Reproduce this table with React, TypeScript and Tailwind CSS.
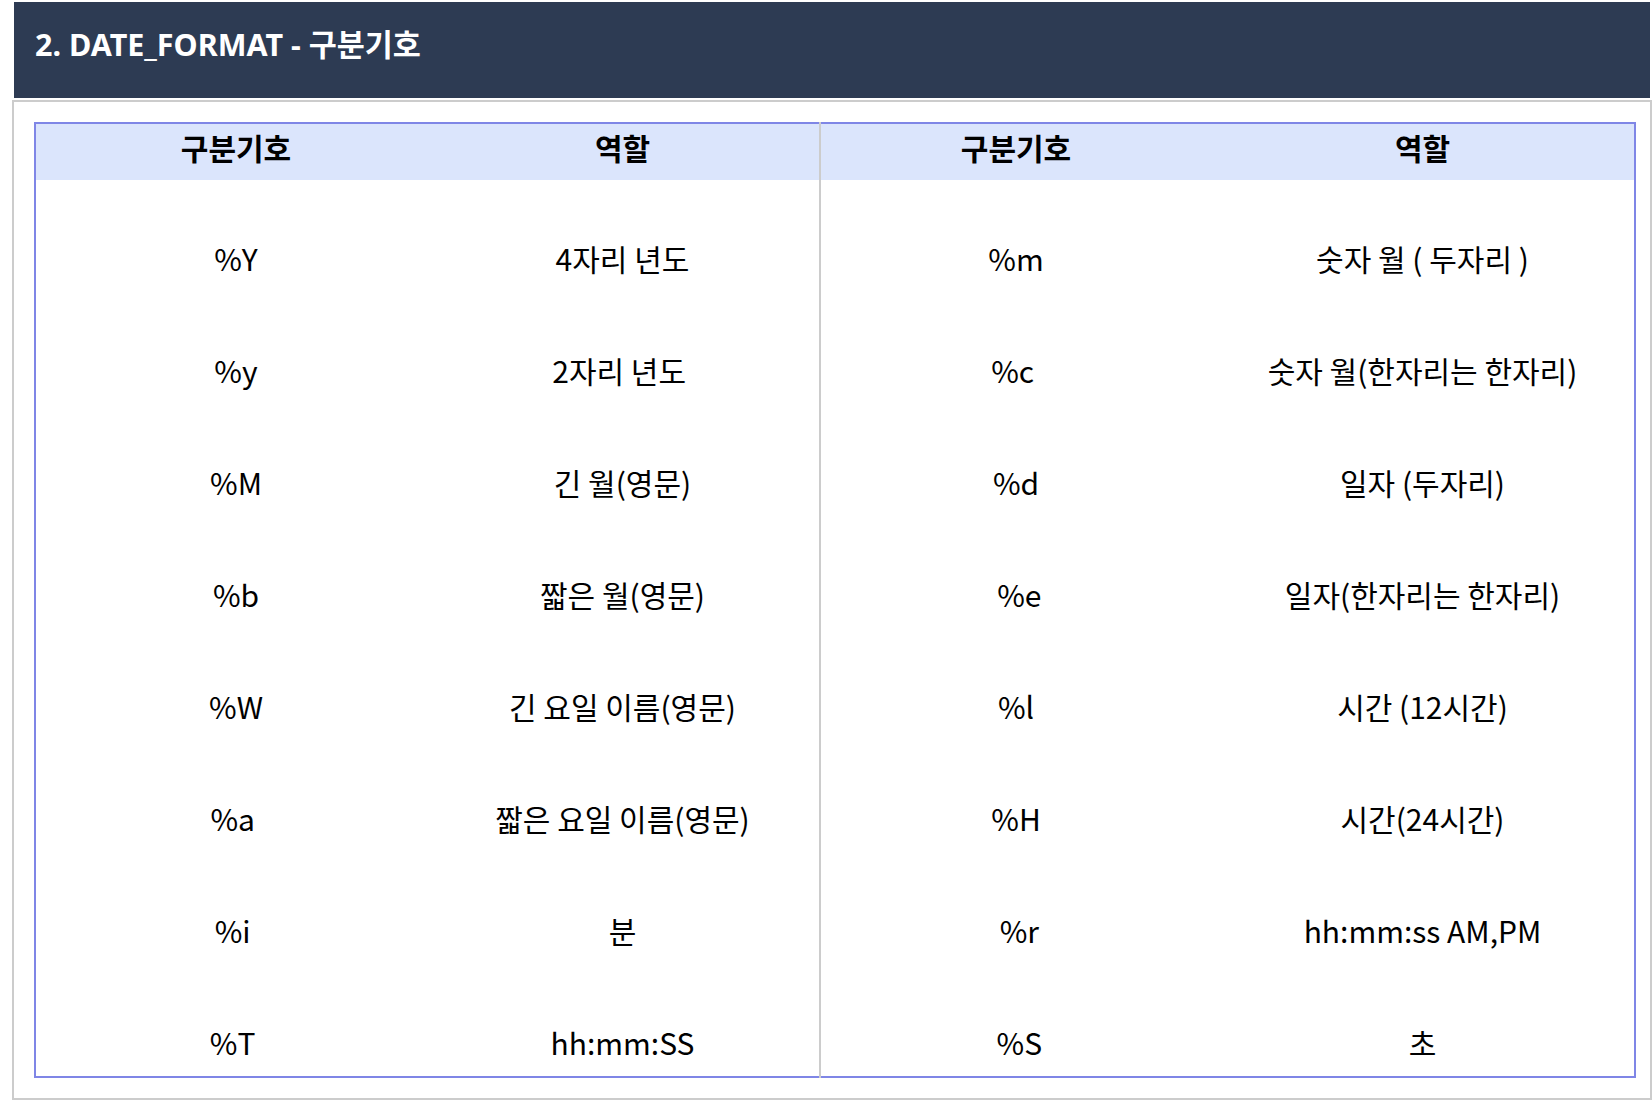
import React from 'react';

const leftRows = [
  ['%Y', '4자리 년도'],
  ['%y', '2자리 년도\u00a0'],
  ['%M', '긴 월(영문)'],
  ['%b', '짧은 월(영문)'],
  ['%W', '긴 요일 이름(영문)'],
  ['%a\u00a0', '짧은 요일 이름(영문)'],
  ['%i\u00a0', '분'],
  ['%T\u00a0', 'hh:mm:SS'],
];

const rightRows = [
  ['%m', '숫자 월 ( 두자리 )'],
  ['%c\u00a0', '숫자 월(한자리는 한자리)'],
  ['%d', '일자 (두자리)'],
  ['\u00a0%e', '일자(한자리는 한자리)'],
  ['%l', '시간 (12시간)'],
  ['%H', '시간(24시간)'],
  ['\u00a0%r', 'hh:mm:ss AM,PM'],
  ['\u00a0%S', '초'],
];

const HalfTable = ({ rows, w1, w2, side }: any) => {
  return (
    <div
      className={
        side === 'left'
          ? 'border-y-2 border-l-2 border-[#7f86e6]'
          : 'border-y-2 border-r-2 border-[#7f86e6]'
      }
    >
      <div className="flex h-[56px] bg-[#dbe5fc] font-bold">
        <div className={`${w1} flex items-center justify-center pb-[9px]`}>구분기호</div>
        <div className={`${w2} flex items-center justify-center pb-[9px]`}>역할</div>
      </div>
      {rows.map((r: string[]) => (
        <div key={r[0]} className="flex h-[112px] pt-[58px]">
          <div className={`${w1} text-center leading-[40px]`}>{r[0]}</div>
          <div className={`${w2} text-center leading-[40px]`}>{r[1]}</div>
        </div>
      ))}
    </div>
  );
};

export default function App() {
  return (
    <div className="min-h-[1104px] bg-white pt-[2px] text-[30px] text-black [font-family:'Noto_Sans_CJK_KR','Noto_Sans',sans-serif]">
      <div className="ml-[14px] flex h-[96px] w-[1636px] items-center bg-[#2d3b53] pb-[10px] pl-[21px] text-[30.5px] font-bold text-white [font-family:'Noto_Sans','Noto_Sans_CJK_KR',sans-serif]">
        2. DATE_FORMAT - 구분기호
      </div>
      <div className="ml-[12px] mt-[2px] h-[1000px] w-[1640px] border-2 border-[#cccccc] pt-5 pl-5">
        <div className="flex w-[1602px]">
          <HalfTable rows={leftRows} w1="w-[400px]" w2="w-[383px] pr-[10px]" side="left" />
          <div className="w-[2px] bg-[#cccccc]" />
          <HalfTable rows={rightRows} w1="w-[390px]" w2="w-[423px]" side="right" />
        </div>
      </div>
    </div>
  );
}
